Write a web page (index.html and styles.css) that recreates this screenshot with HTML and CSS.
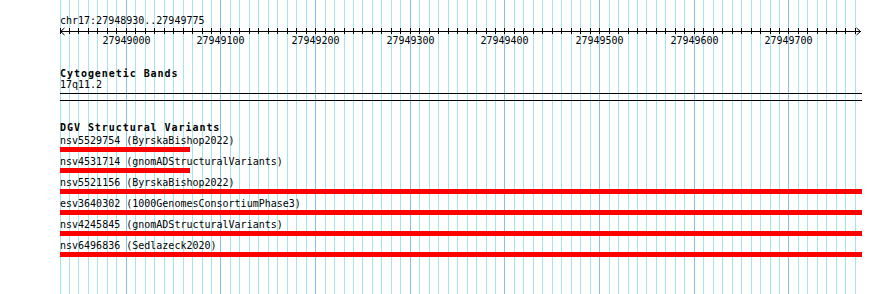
FILE: index.html
```html
<!DOCTYPE html>
<html lang="en">
<head>
    <meta charset="UTF-8">
    <title>chr17:27948930..27949775</title>
    <link rel="stylesheet" href="styles.css">
</head>
<body>
    <div class="browser">
        <svg class="grid" id="grid" width="890" height="294"></svg>

        <div class="tracks">
            <div class="ruler">
                <div class="locstring">chr17:27948930..27949775</div>
                <svg class="scale" id="scale" width="802" height="20"></svg>
            </div>

            <section class="track cyto">
                <h2 class="track-title">Cytogenetic Bands</h2>
                <div class="band-label">17q11.2</div>
                <div class="band"></div>
            </section>

            <section class="track dgv">
                <h2 class="track-title">DGV Structural Variants</h2>
                <div class="feature">
                    <div class="feature-label">nsv5529754 (ByrskaBishop2022)</div>
                    <div class="feature-bar" style="width: 130px"></div>
                </div>
                <div class="feature">
                    <div class="feature-label">nsv4531714 (gnomADStructuralVariants)</div>
                    <div class="feature-bar" style="width: 130px"></div>
                </div>
                <div class="feature">
                    <div class="feature-label">nsv5521156 (ByrskaBishop2022)</div>
                    <div class="feature-bar"></div>
                </div>
                <div class="feature">
                    <div class="feature-label">esv3640302 (1000GenomesConsortiumPhase3)</div>
                    <div class="feature-bar"></div>
                </div>
                <div class="feature">
                    <div class="feature-label">nsv4245845 (gnomADStructuralVariants)</div>
                    <div class="feature-bar"></div>
                </div>
                <div class="feature">
                    <div class="feature-label">nsv6496836 (Sedlazeck2020)</div>
                    <div class="feature-bar"></div>
                </div>
            </section>
        </div>
    </div>

    <script>
    // view: chr17:27948930..27949775 drawn over 800px starting at x=60
    const start = 27948930;
    const end = 27949775;
    const left = 60;
    const pxPerBp = 800 / (end - start);
    const NS = 'http://www.w3.org/2000/svg';

    function el(name, attrs) {
        const node = document.createElementNS(NS, name);
        for (const key in attrs) node.setAttribute(key, attrs[key]);
        return node;
    }

    const grid = document.getElementById('grid');
    const scale = document.getElementById('scale');

    for (let bp = start; bp <= end; bp += 10) {
        const x = Math.floor(left + (bp - start) * pxPerBp);
        const major = bp % 100 === 0;

        grid.appendChild(el('line', {
            x1: x + 0.5, x2: x + 0.5, y1: 0, y2: 294,
            class: major ? 'gridline major' : 'gridline'
        }));

        const lx = x - left + 0.5;
        scale.appendChild(el('line', { x1: lx, x2: lx, y1: 1, y2: 7, class: 'tick' }));

        if (major) {
            const label = el('text', { x: lx, y: 17, class: 'tick-label' });
            label.textContent = bp;
            scale.appendChild(label);
        }
    }

    // axis with arrow heads on both ends
    scale.appendChild(el('line', { x1: 0, x2: 801, y1: 4.5, y2: 4.5, class: 'tick' }));
    scale.appendChild(el('polyline', { points: '4.5,1 0.5,4.5 4.5,8', class: 'arrow' }));
    scale.appendChild(el('polyline', { points: '796.5,1 800.5,4.5 796.5,8', class: 'arrow' }));
    </script>
</body>
</html>
```

FILE: styles.css
```css
:root {
    --grid-minor: #a2e6ee;
    --grid-major: #84c2ec;
    --feature-color: #ff0000;
    --track-width: 802px;
}

* {
    margin: 0;
    padding: 0;
    box-sizing: border-box;
}

body {
    background-color: #fff;
    color: #000;
    font-family: 'DejaVu Sans Mono', 'Liberation Mono', monospace;
    font-size: 10px;
    line-height: 12px;
}

.browser {
    position: relative;
    width: 890px;
    height: 294px;
    overflow: hidden;
}

.grid {
    position: absolute;
    top: 0;
    left: 0;
}

.gridline {
    stroke: var(--grid-minor);
    stroke-width: 1;
}

.gridline.major {
    stroke: var(--grid-major);
}

.tracks {
    position: relative;
    padding: 15px 0 0 60px;
}

.ruler {
    width: var(--track-width);
}

.scale {
    display: block;
}

.scale .tick {
    stroke: #000;
    stroke-width: 1;
}

.scale .arrow {
    fill: none;
    stroke: #000;
    stroke-width: 1;
}

.scale .tick-label {
    font-family: 'DejaVu Sans Mono', 'Liberation Mono', monospace;
    font-size: 10px;
    text-anchor: middle;
    fill: #000;
}

.track {
    width: var(--track-width);
}

.track-title {
    font-size: 10px;
    font-weight: bold;
    letter-spacing: 0.95px;
    line-height: 12px;
}

.cyto {
    margin-top: 21px;
}

.band-label {
    margin-top: -1px;
}

.band {
    height: 8px;
    margin-top: 2px;
    border-top: 1px solid #000;
    border-bottom: 1px solid #000;
}

.dgv {
    margin-top: 21px;
}

.dgv .track-title {
    margin-bottom: 1px;
}

.feature {
    margin-bottom: 4px;
}

.feature-label {
    white-space: nowrap;
}

.feature-bar {
    height: 5px;
    width: 100%;
    background-color: var(--feature-color);
}
```
